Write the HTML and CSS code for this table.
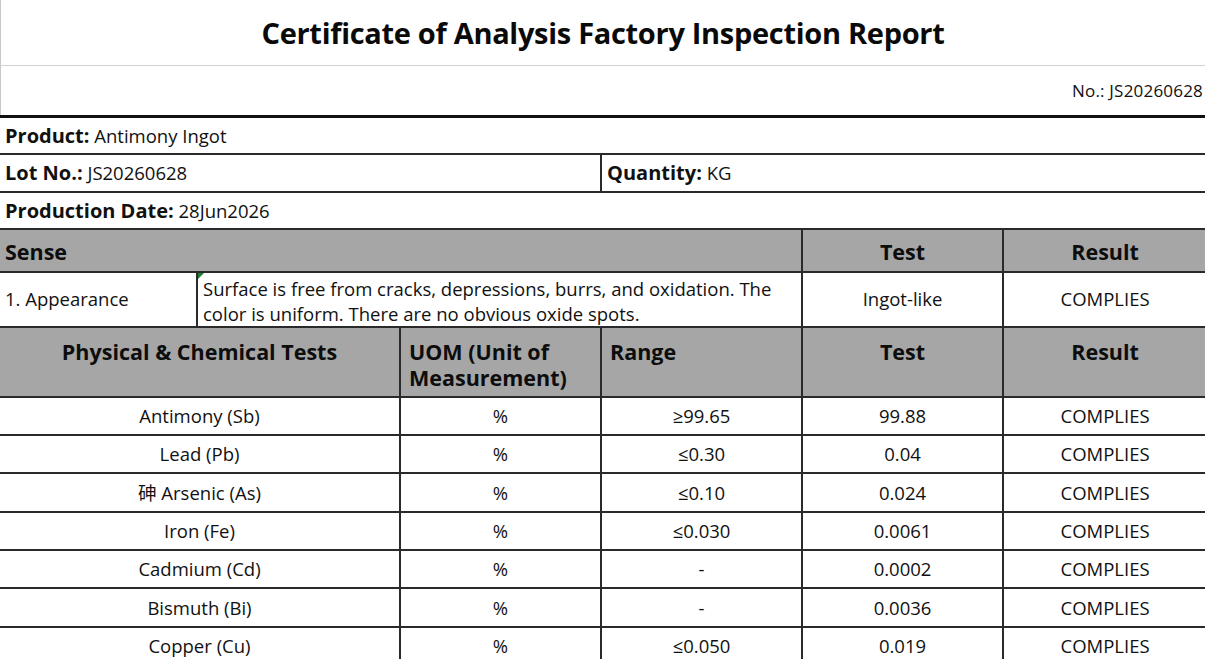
FILE: index.html
```html
<!DOCTYPE html>
<html lang="en">
<head>
<meta charset="utf-8">
<title>Certificate of Analysis</title>
<link rel="stylesheet" href="styles.css">
</head>
<body>
<div class="sheet">
  <div class="title-row"><h1 class="title">Certificate of Analysis Factory Inspection Report</h1></div>
  <div class="no-row"><span class="no">No.: JS20260628</span></div>
  <table class="coa">
    <colgroup>
      <col class="c1"><col class="c2"><col class="c3"><col class="c4"><col class="c5"><col class="c6">
    </colgroup>
    <tr class="info">
      <td colspan="6"><b>Product:</b> Antimony Ingot</td>
    </tr>
    <tr class="info">
      <td colspan="3"><b>Lot No.:</b> JS20260628</td>
      <td colspan="3"><b>Quantity:</b> KG</td>
    </tr>
    <tr class="info">
      <td colspan="6"><b>Production Date:</b> 28Jun2026</td>
    </tr>
    <tr class="head sense-head">
      <th colspan="4" class="left">Sense</th>
      <th>Test</th>
      <th>Result</th>
    </tr>
    <tr class="appearance">
      <td class="left">1. Appearance</td>
      <td colspan="3" class="desc">Surface is free from cracks, depressions, burrs, and oxidation. The color is uniform. There are no obvious oxide spots.</td>
      <td>Ingot-like</td>
      <td>COMPLIES</td>
    </tr>
    <tr class="head phys-head">
      <th colspan="2">Physical &amp; Chemical Tests</th>
      <th class="left">UOM (Unit of Measurement)</th>
      <th class="left">Range</th>
      <th>Test</th>
      <th>Result</th>
    </tr>
    <tr class="data"><td colspan="2">Antimony (Sb)</td><td>%</td><td>≥99.65</td><td>99.88</td><td>COMPLIES</td></tr>
    <tr class="data"><td colspan="2">Lead (Pb)</td><td>%</td><td>≤0.30</td><td>0.04</td><td>COMPLIES</td></tr>
    <tr class="data"><td colspan="2">砷 Arsenic (As)</td><td>%</td><td>≤0.10</td><td>0.024</td><td>COMPLIES</td></tr>
    <tr class="data"><td colspan="2">Iron (Fe)</td><td>%</td><td>≤0.030</td><td>0.0061</td><td>COMPLIES</td></tr>
    <tr class="data"><td colspan="2">Cadmium (Cd)</td><td>%</td><td>-</td><td>0.0002</td><td>COMPLIES</td></tr>
    <tr class="data"><td colspan="2">Bismuth (Bi)</td><td>%</td><td>-</td><td>0.0036</td><td>COMPLIES</td></tr>
    <tr class="data"><td colspan="2">Copper (Cu)</td><td>%</td><td>≤0.050</td><td>0.019</td><td>COMPLIES</td></tr>
  </table>
</div>
</body>
</html>
```

FILE: styles.css
```css
html, body {
  margin: 0;
  padding: 0;
  background: #fff;
}
body {
  font-family: "Open Sans", "Noto Sans CJK SC", sans-serif;
  color: #111;
  overflow: hidden;
}
.sheet {
  width: 1210px;
}
.title-row {
  height: 66px;
  border-left: 1px solid #c8c8c8;
  border-bottom: 1px solid #d2d2d2;
  display: flex;
  align-items: center;
  justify-content: center;
  box-sizing: border-box;
  width: 1205px;
}
.title {
  margin: 0;
  font-size: 29px;
  font-weight: 700;
  letter-spacing: -0.3px;
  color: #0a0a0a;
}
.no-row {
  height: 49px;
  width: 1205px;
  box-sizing: border-box;
  border-left: 1px solid #c8c8c8;
  display: flex;
  justify-content: flex-end;
  align-items: flex-start;
  padding-top: 13px;
}
.no {
  font-size: 17px;
  letter-spacing: 0.2px;
  margin-right: 2px;
}
.coa {
  border-collapse: collapse;
  table-layout: fixed;
  width: 1207px;
  border-top: 3px solid #111;
}
.c1 { width: 197px; }
.c2 { width: 203px; }
.c3 { width: 201px; }
.c4 { width: 201px; }
.c5 { width: 201px; }
.c6 { width: 204px; }
.coa td, .coa th {
  border: 2px solid #2a2a2a;
  border-left-width: 0;
  padding: 0 5px;
  font-size: 18.5px;
  line-height: 22px;
  text-align: center;
  vertical-align: middle;
}
.coa td + td, .coa th + th {
  border-left-width: 2px;
}
.info td {
  height: 34.3px;
  text-align: left;
  font-size: 18.5px;
  padding-top: 1px;
}
.info b {
  font-size: 20px;
  font-weight: 700;
}
.head th {
  background: #a6a6a6;
  font-weight: 700;
  font-size: 21.5px;
  color: #0d0d0d;
}
.sense-head th {
  height: 38px;
  padding-top: 3px;
}
.coa .left {
  text-align: left;
}
.appearance td {
  height: 50px;
}
.appearance td.left {
  text-align: left;
}
.appearance .desc {
  text-align: left;
  position: relative;
  line-height: 25px;
  padding-top: 3px;
  vertical-align: top;
}
.appearance .desc::before {
  content: "";
  position: absolute;
  left: 0;
  top: 0;
  border-top: 6px solid #1e7b34;
  border-right: 6px solid transparent;
}
.phys-head th {
  height: 57px;
  vertical-align: top;
  padding-top: 11px;
  line-height: 26px;
}
.phys-head th.left {
  padding-left: 8px;
}
.data td {
  height: 36.3px;
}
```
